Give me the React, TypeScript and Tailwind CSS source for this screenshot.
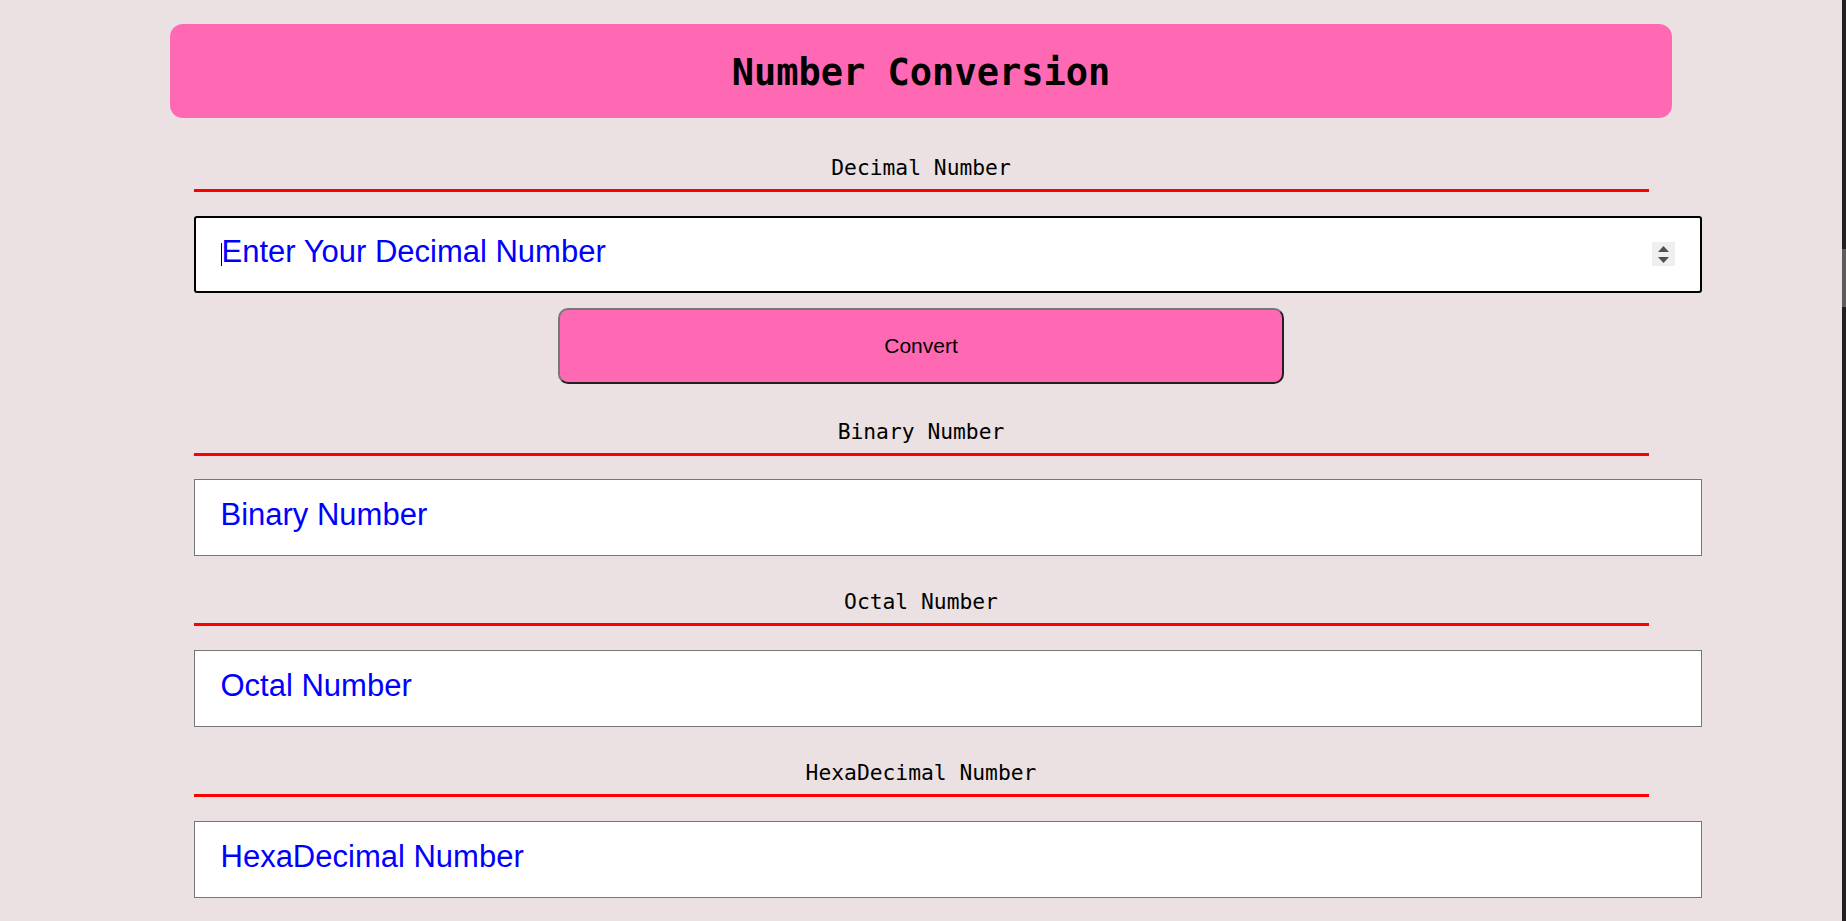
import React from 'react';

const mono = "font-['DejaVu_Sans_Mono',monospace]";
const sans = "font-['Liberation_Sans',Arial,sans-serif]";

type FieldProps = {
  label: string;
  placeholder: string;
  gapTop: string;
  inputGap: string;
};

function Label({ text }: { text: string }) {
  return (
    <>
      <div className={`${mono} text-[21.3px] leading-[24px] text-black text-center`}>{text}</div>
      <div className="mt-[9px] h-[3px] bg-[#ff0000]" />
    </>
  );
}

function OutputField({ label, placeholder, gapTop, inputGap }: FieldProps) {
  return (
    <div className={gapTop}>
      <Label text={label} />
      <input
        type="text"
        readOnly
        placeholder={placeholder}
        className={`${sans} ${inputGap} block w-[1508px] h-[77px] box-border bg-white border border-[#767676] pl-[26px] pb-[5px] text-[31px] outline-none placeholder:text-[#0000ff]`}
      />
    </div>
  );
}

export default function App() {
  return (
    <div className="min-h-screen bg-[#ebe1e2] pr-[4px] pt-[24px] pb-[40px]">
      <div className="mx-auto w-[1502px] h-[94px] rounded-[13px] bg-[#ff69b4] flex items-center justify-center pt-[3px]">
        <h1 className={`${mono} text-[37px] font-bold text-black`}>Number Conversion</h1>
      </div>

      <div className="mx-auto w-[1455px]">
        <div className="mt-[38px]">
          <Label text="Decimal Number" />
          <div className="relative mt-[24px] w-[1508px]">
            <input
              type="text"
              inputMode="numeric"
              placeholder="Enter Your Decimal Number"
              className={`${sans} block w-full h-[77px] box-border bg-white border-2 border-black rounded-[3px] pl-[26px] pb-[6px] text-[31px] outline-none placeholder:text-[#0000ff]`}
            />
            {/* caret */}
            <span className="absolute left-[27px] top-[27px] h-[23px] w-px bg-black" />
            {/* spinner */}
            <div className="absolute right-[27px] top-[26px] w-[23px] h-[24px] bg-[#efefef] flex flex-col items-center justify-center gap-[5px]">
              <svg width="11" height="6" viewBox="0 0 11 6"><path d="M5.5 0L11 6H0z" fill="#505050" /></svg>
              <svg width="11" height="6" viewBox="0 0 11 6"><path d="M0 0h11L5.5 6z" fill="#505050" /></svg>
            </div>
          </div>
        </div>

        <button
          className={`${sans} mt-[15px] mx-auto block w-[726px] h-[76px] box-border rounded-[10px] bg-[#ff69b4] border-2 border-t-[#767676] border-l-[#767676] border-b-[#212121] border-r-[#212121] text-[21px] text-black`}
        >
          Convert
        </button>

        <OutputField label="Binary Number" placeholder="Binary Number" gapTop="mt-[36px]" inputGap="mt-[23px]" />
        <OutputField label="Octal Number" placeholder="Octal Number" gapTop="mt-[34px]" inputGap="mt-[24px]" />
        <OutputField label="HexaDecimal Number" placeholder="HexaDecimal Number" gapTop="mt-[34px]" inputGap="mt-[24px]" />
      </div>

      {/* window scrollbar */}
      <div className="fixed right-0 top-0 h-full w-[4px] bg-[#202020]">
        <div className="absolute left-0 top-[249px] h-[58px] w-full bg-[#5c5c5c]" />
      </div>
    </div>
  );
}
